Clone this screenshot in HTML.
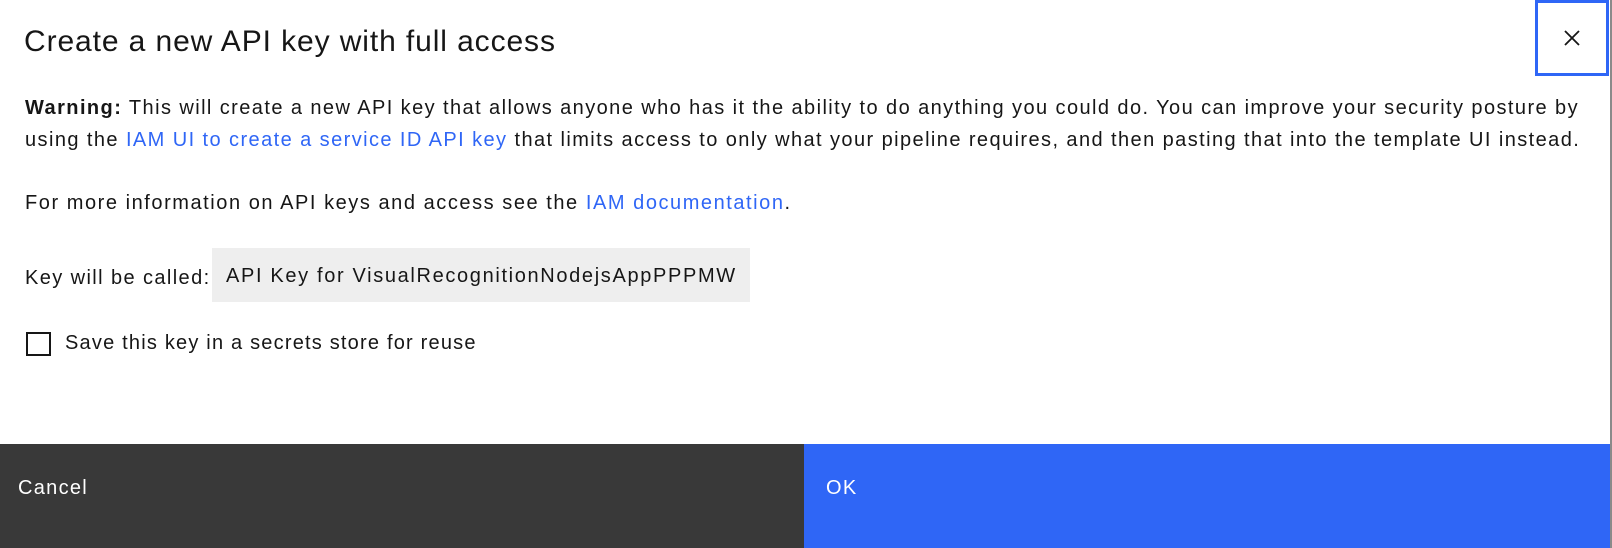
<!DOCTYPE html>
<html><head><meta charset="utf-8"><style>
*{margin:0;padding:0;box-sizing:border-box}
body{width:1612px;height:548px;overflow:hidden;background:#fff;font-family:"Liberation Sans",sans-serif;color:#161616;position:relative}
.edge{position:absolute;right:0;top:0;width:2px;height:548px;background:#8a8a8a}
h1{position:absolute;left:24px;top:25px;font-size:30px;font-weight:400;white-space:nowrap;letter-spacing:0.9px}
.close{position:absolute;left:1535px;top:0;width:74px;height:76px;border:3px solid #2f66f6;display:flex;align-items:center;justify-content:center}
.p{position:absolute;left:25px;font-size:20px;white-space:nowrap;line-height:32px;letter-spacing:1.42px}
a{color:#2f66f6;text-decoration:none}
.keybox{position:absolute;left:212px;top:248px;width:538px;height:54px;background:#eeeeee;font-size:20px;letter-spacing:1.65px;padding-left:14px;line-height:56px;white-space:nowrap}
.cb{position:absolute;left:26px;top:332px;width:25px;height:24px;border:2px solid #161616}
.foot{position:absolute;top:444px;height:104px;font-size:20px;letter-spacing:1.3px;color:#fff;padding-left:18px;line-height:88px}
</style></head><body>
<div class="edge"></div>
<h1>Create a new API key with full access</h1>
<div class="close"><svg width="18" height="18" viewBox="0 0 18 18"><path d="M2 2L16 16M16 2L2 16" stroke="#161616" stroke-width="1.8"/></svg></div>
<div class="p" style="top:92px"><b>Warning:</b> This will create a new API key that allows anyone who has it the ability to do anything you could do. You can improve your security posture by</div>
<div class="p" style="top:124px">using the <a>IAM UI to create a service ID API key</a> that limits access to only what your pipeline requires, and then pasting that into the template UI instead.</div>
<div class="p" style="top:187px;letter-spacing:1.55px">For more information on API keys and access see the <a>IAM documentation</a>.</div>
<div class="p" style="top:262px;letter-spacing:1.4px">Key will be called:</div>
<div class="keybox">API Key for VisualRecognitionNodejsAppPPPMW</div>
<div class="cb"></div>
<div class="p" style="top:327px;left:65px;letter-spacing:1.2px">Save this key in a secrets store for reuse</div>
<div class="foot" style="left:0;width:804px;background:#393939">Cancel</div>
<div class="foot" style="left:804px;width:806px;background:#2f66f6;padding-left:22px">OK</div>
</body></html>
